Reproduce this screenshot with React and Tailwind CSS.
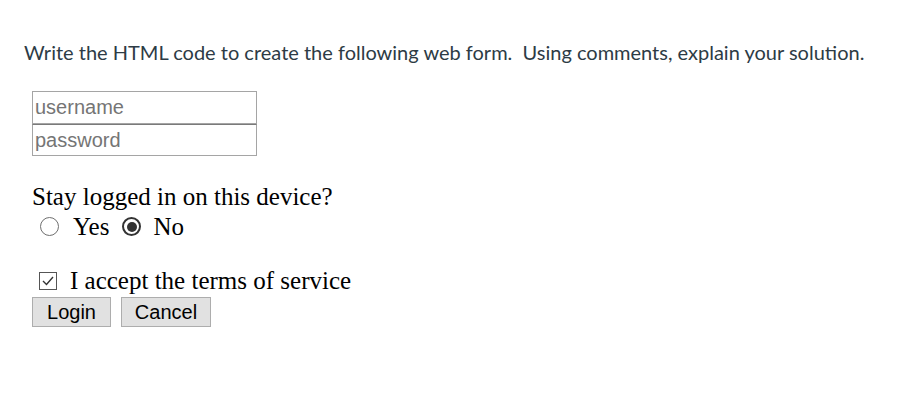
export default function App() {
  return (
    <div className="w-[911px] h-[419px] bg-white overflow-hidden">
      {/* prompt */}
      <p className="pt-[37px] pl-[24px] text-[20px] leading-[30px] text-[#2d3b45] font-['Lato',sans-serif]">
        Write the HTML code to create the following web form.&nbsp; Using comments, explain your solution.
      </p>

      {/* login fields */}
      <div className="mt-[24px] ml-[32px] flex flex-col w-[225px]">
        <input
          readOnly
          placeholder="username"
          className="h-[33px] w-[225px] border border-[#a5a5a5] px-[2px] text-[20px] font-['Liberation_Sans',Arial,sans-serif] placeholder:text-[#757575] outline-none"
        />
        <input
          readOnly
          placeholder="password"
          className="h-[32px] w-[225px] border border-[#a5a5a5] border-t-[#7a7a7a] px-[2px] text-[20px] font-['Liberation_Sans',Arial,sans-serif] placeholder:text-[#757575] outline-none"
        />
      </div>

      <div className="ml-[32px] font-['Liberation_Serif','Times_New_Roman',serif] text-[25px] leading-[29px] text-black">
        <p className="mt-[26px]">Stay logged in on this device?</p>

        {/* radios */}
        <div className="mt-[1px] flex items-center h-[29px]">
          <span className="ml-[8px] w-[19px] h-[19px] rounded-full border border-[#6f6f6f] bg-white" />
          <span className="ml-[14px]">Yes</span>
          <span className="ml-[13px] w-[19px] h-[19px] rounded-full border-2 border-[#333333] bg-white flex items-center justify-center">
            <span className="w-[10px] h-[10px] rounded-full bg-[#333333]" />
          </span>
          <span className="ml-[12px]">No</span>
        </div>

        {/* terms */}
        <div className="mt-[25px] flex items-center h-[29px]">
          <span className="ml-[7px] w-[18px] h-[18px] border border-[#555555] bg-white flex items-center justify-center">
            <svg width="14" height="14" viewBox="0 0 14 14">
              <polyline points="2,7 5.5,10.5 12,3" fill="none" stroke="#333333" strokeWidth="1.4" />
            </svg>
          </span>
          <span className="ml-[13px]">I accept the terms of service</span>
        </div>

        {/* buttons */}
        <div className="mt-[2px] flex gap-[10px]">
          <button className="w-[79px] h-[30px] bg-[#e1e1e1] border border-[#adadad] text-[20px] leading-none text-black font-['Liberation_Sans',Arial,sans-serif]">
            Login
          </button>
          <button className="w-[90px] h-[30px] bg-[#e1e1e1] border border-[#adadad] text-[20px] leading-none text-black font-['Liberation_Sans',Arial,sans-serif]">
            Cancel
          </button>
        </div>
      </div>
    </div>
  );
}
